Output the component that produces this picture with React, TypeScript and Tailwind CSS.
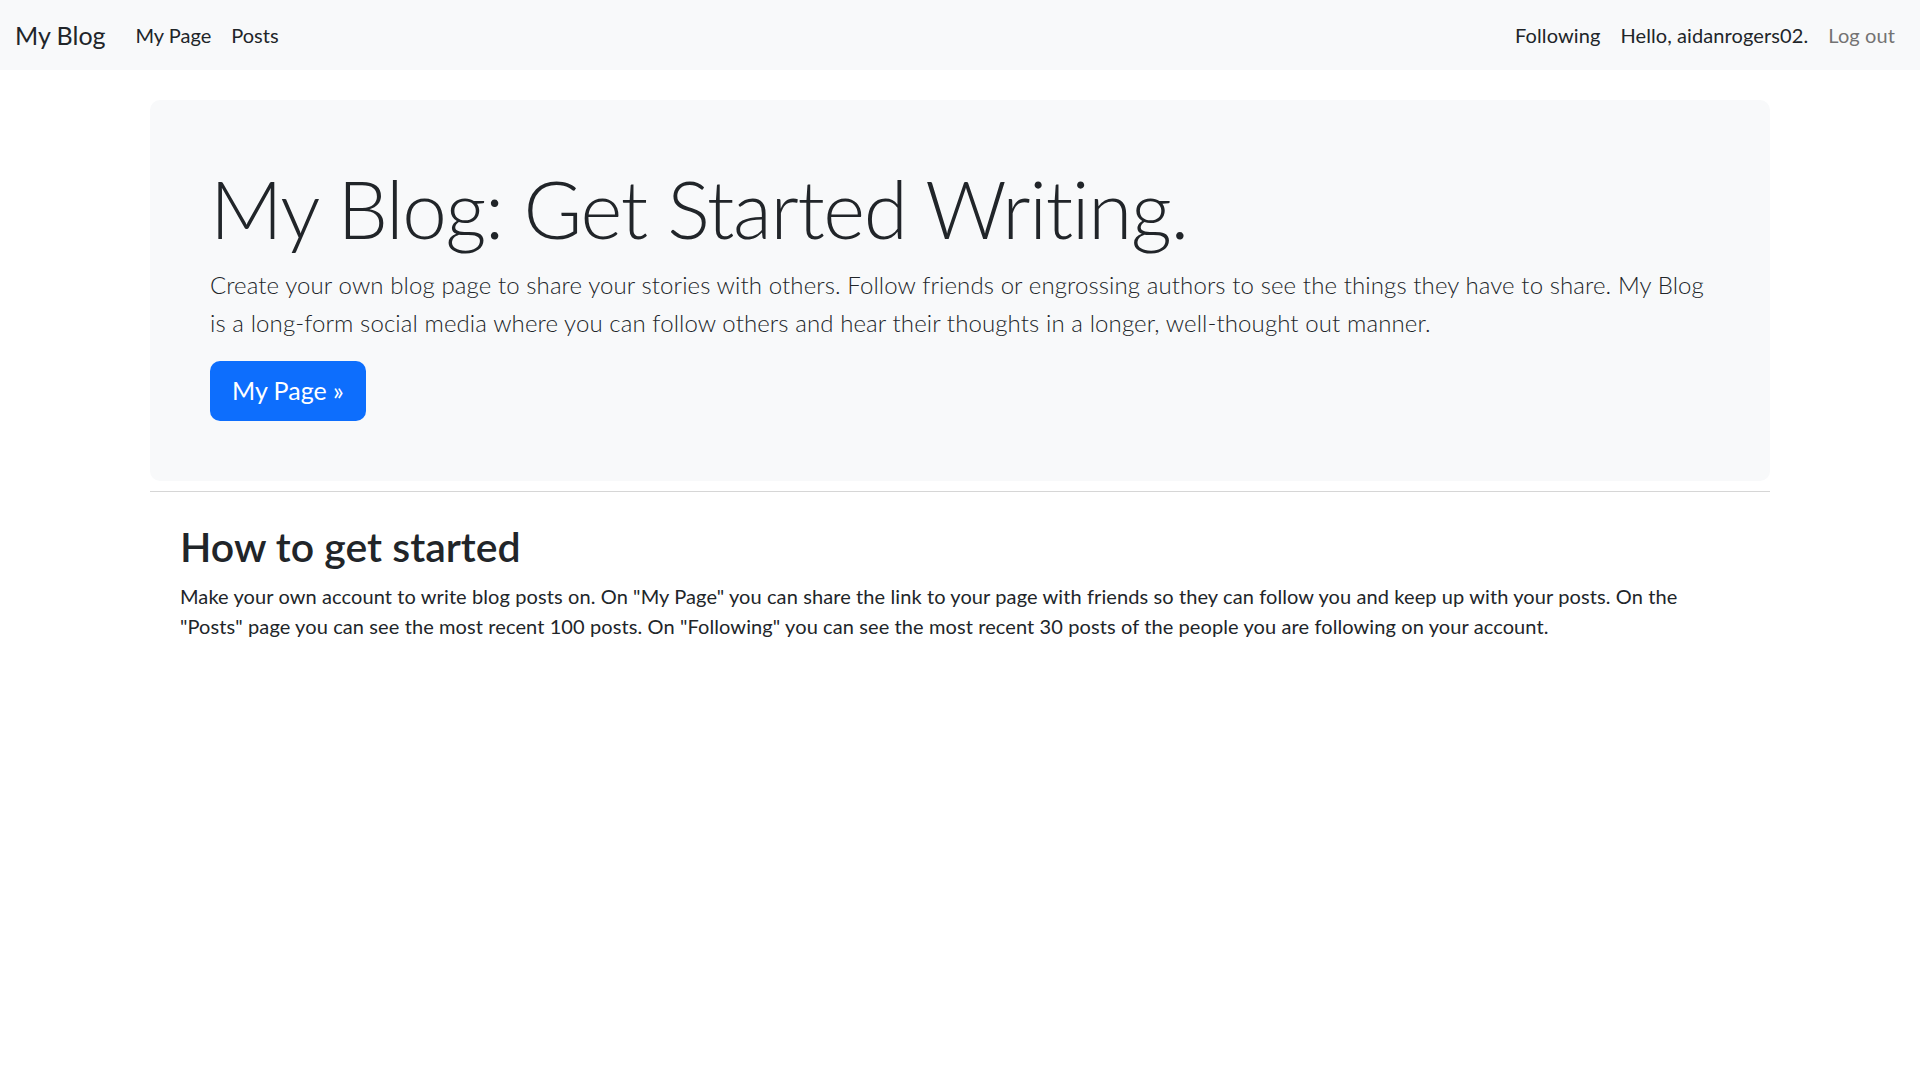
const navLinks = ["My Page", "Posts"];

export default function App() {
  return (
    <div className="min-h-screen bg-white font-[Lato,sans-serif] text-[#212529]">
      <nav className="flex h-[70px] items-center justify-between bg-[#f8f9fa] px-[15px]">
        <div className="flex items-center">
          <a className="mr-[20px] text-[25px] leading-[38px]">My Blog</a>
          {navLinks.map((l) => (
            <a key={l} className="px-[10px] text-[20px] leading-[30px]">
              {l}
            </a>
          ))}
        </div>
        <div className="flex items-center text-[20px] leading-[30px] tracking-[0.1px]">
          <a className="px-[10px]">Following</a>
          <span className="px-[10px]">Hello, aidanrogers02.</span>
          <a className="px-[10px] text-[#737373]">Log out</a>
        </div>
      </nav>

      <main className="mx-auto w-[1620px] pt-[30px]">
        <div className="rounded-[10px] bg-[#f8f9fa] p-[60px]">
          <h1 className="mb-[10px] text-[80px] leading-[1.2] font-light tracking-[-1.3px]">
            My Blog: Get Started Writing.
          </h1>
          <p className="mb-[20px] text-[24px] leading-[37.5px] font-light tracking-[0.1px]">
            Create your own blog page to share your stories with others. Follow
            friends or engrossing authors to see the things they have to share.
            My Blog is a long-form social media where you can follow others and
            hear their thoughts in a longer, well-thought out manner.
          </p>
          <button className="flex h-[60px] items-center rounded-[10px] bg-[#0d6efd] px-[22px] text-[25px] text-white">
            My Page »
          </button>
        </div>

        <hr className="mt-[10px] border-0 border-t border-[#d6d6d6]" />

        <section className="pt-[30px] pr-[60px] pl-[30px]">
          <h2 className="mb-[10px] text-[41px] leading-[1.2] font-semibold">
            How to get started
          </h2>
          <p className="text-[20px] leading-[30px] tracking-[0.1px]">
            Make your own account to write blog posts on. On "My Page" you can
            share the link to your page with friends so they can follow you and
            keep up with your posts. On the "Posts" page you can see the most
            recent 100 posts. On "Following" you can see the most recent 30
            posts of the people you are following on your account.
          </p>
        </section>
      </main>
    </div>
  );
}
